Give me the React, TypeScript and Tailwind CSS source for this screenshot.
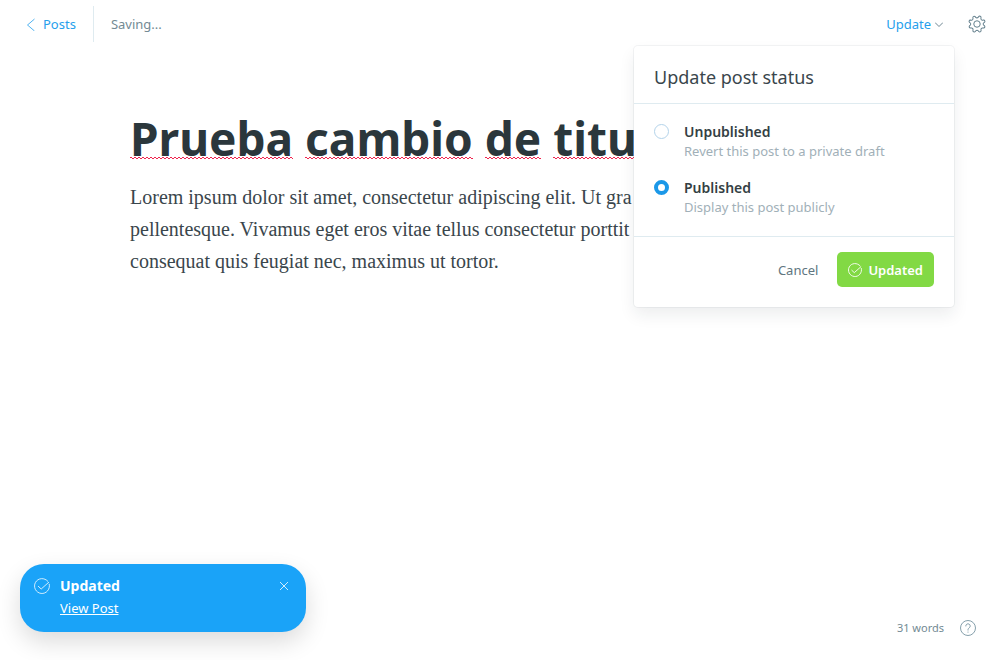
import { useState } from "react";

const titleWords = ["Prueba", "cambio", "de", "titu"];

const statuses = [
  { id: "draft", label: "Unpublished", hint: "Revert this post to a private draft" },
  { id: "published", label: "Published", hint: "Display this post publicly" },
];

function CheckCircle({ className }: { className: string }) {
  return (
    <svg viewBox="0 0 24 24" fill="none" stroke="currentColor" strokeLinecap="round" strokeLinejoin="round" className={className} aria-hidden="true">
      <path d="M22.9 9.3A11.2 11.2 0 1 1 20.6 4.8" />
      <path d="M6.5 12.5l4.3 4L22 6.5" />
    </svg>
  );
}

function Gear() {
  return (
    <svg viewBox="0 0 24 24" fill="none" stroke="currentColor" strokeWidth="1.3" strokeLinejoin="round" className="size-4.5" aria-hidden="true">
      <g transform="rotate(22.5 12 12)">
        <path d="M13.7 2.1a1.75 1.75 0 0 0-3.4 0l-.35 1.2a2 2 0 0 1-2.85 1.2L6 3.9A1.75 1.75 0 0 0 3.7 6.3l.6 1.1a2 2 0 0 1-1.1 2.8l-1.5.4a1.75 1.75 0 0 0 0 3.1l1.5.5a2 2 0 0 1 1.1 2.7l-.6 1.2A1.75 1.75 0 0 0 6 20.3l1.1-.6a2 2 0 0 1 2.85 1.2l.35 1.2a1.75 1.75 0 0 0 3.4 0l.35-1.2a2 2 0 0 1 2.85-1.2l1.1.6a1.75 1.75 0 0 0 2.4-2.3l-.7-1.2a2 2 0 0 1 1.2-2.7l1.4-.5a1.75 1.75 0 0 0 0-3.1l-1.4-.4a2 2 0 0 1-1.2-2.8l.7-1.1A1.75 1.75 0 0 0 18 3.9l-1.1.6a2 2 0 0 1-2.85-1.2z" />
      </g>
      <circle cx="12" cy="12" r="4.3" />
    </svg>
  );
}

function StatusMenu() {
  const [status, setStatus] = useState("published");
  return (
    <section
      aria-label="Update post status"
      className="absolute top-full right-0 z-10 w-80 rounded-[4px] bg-white shadow-[0_0_0_1px_rgba(99,114,130,0.08),0_8px_16px_rgba(27,39,51,0.08)]"
    >
      <h2 className="border-b border-[#dfebf0] px-5 pt-[17px] pb-3 text-lg leading-7 text-[#3a464c]">Update post status</h2>
      <fieldset className="flex flex-col gap-4.5 px-5 pt-4.5 pb-5">
        {statuses.map((item) => (
          <label key={item.id} className="flex items-start gap-[15px]">
            <input
              type="radio"
              name="status"
              checked={status === item.id}
              onChange={() => setStatus(item.id)}
              className="mt-0.5 size-[15px] shrink-0 appearance-none rounded-full border border-[#b3d3ea] bg-white checked:border-4 checked:border-[#1b98e8]"
            />
            <span className="flex flex-col">
              <span className="text-sm leading-5 font-semibold text-[#343f44]">{item.label}</span>
              <span className="text-[13px] leading-[18px] text-[#a1b0b8]">{item.hint}</span>
            </span>
          </label>
        ))}
      </fieldset>
      <footer className="flex items-center justify-end gap-[19px] border-t border-[#dfebf0] px-5 pt-[15px] pb-5">
        <button type="button" className="text-[13px] text-[#607680]">Cancel</button>
        <button type="button" className="flex h-[35px] items-center gap-1.5 rounded-[5px] bg-[#82d944] px-[11px] text-[13px] font-semibold text-white">
          <CheckCircle className="size-3.5 stroke-[1.5]" />
          Updated
        </button>
      </footer>
    </section>
  );
}

export default function App() {
  return (
    <div className="flex min-h-screen flex-col overflow-x-hidden bg-white font-['Noto_Sans',sans-serif] text-[13px] leading-5 text-[#738a94]">
      <header className="flex h-12 items-center justify-between pr-3.5 pl-6">
        <div className="flex items-center">
          <a href="#posts" className="flex h-9 items-center gap-1.5 border-r border-[#dfebf0] pr-[17px] text-[#26a0ec]">
            <svg viewBox="0 0 13 13" fill="none" stroke="currentColor" strokeWidth="0.8" className="size-[13px]" aria-hidden="true">
              <path d="M10.5 1L3.5 7l7 6" />
            </svg>
            Posts
          </a>
          <span className="pl-[17px]">Saving...</span>
        </div>
        <div className="flex items-center gap-3.5">
          <div className="relative flex h-11 items-center pr-[11px]">
            <button type="button" aria-expanded="true" className="flex items-center gap-1 text-[#26a0ec]">
              Update
              <svg viewBox="0 0 8 8" fill="none" stroke="#5f7986" strokeWidth="0.9" className="size-2" aria-hidden="true">
                <path d="M0 2.5l4 4 4-4" />
              </svg>
            </button>
            <StatusMenu />
          </div>
          <button type="button" aria-label="Settings" className="text-[#607d8a]">
            <Gear />
          </button>
        </div>
      </header>

      <main className="mx-auto w-full max-w-[740px] flex-1 pt-[60px]">
        <h1 className="text-[46px] leading-[60px] font-bold text-[#2b373c]">
          {titleWords.map((word, i) => (
            <span key={word}>
              {i > 0 && " "}
              <span className="bg-[linear-gradient(90deg,#f0244e_50%,transparent_50%),linear-gradient(90deg,#f0244e_50%,transparent_50%)] [background-position:0_calc(100%-11px),2px_calc(100%-10px)] [background-size:4px_1px] bg-repeat-x">
                {word}
              </span>
            </span>
          ))}
        </h1>
        <p className="mt-[13px] font-['Liberation_Serif',serif] text-xl leading-8 text-[#3a464c]">
          Lorem ipsum dolor sit amet, consectetur adipiscing elit. Ut gra
          <br />
          pellentesque. Vivamus eget eros vitae tellus consectetur porttit
          <br />
          consequat quis feugiat nec, maximus ut tortor.
        </p>
      </main>

      <footer className="flex items-end justify-between pt-6 pr-6 pb-[22px] pl-5">
        <aside
          role="status"
          className="mb-1.5 flex h-17 w-[286px] items-start gap-2.5 rounded-3xl bg-[#1aa3f8] pt-3 pr-4 pl-3.5 text-white shadow-[0_10px_24px_rgba(0,0,0,0.14)]"
        >
          <CheckCircle className="mt-0.5 size-4 stroke-[1.2]" />
          <div className="flex flex-1 flex-col gap-0.5">
            <strong className="text-sm leading-5 font-bold">Updated</strong>
            <a href="#view" className="self-start underline">View Post</a>
          </div>
          <button type="button" aria-label="Close notification" className="mt-1.5 mr-0.5">
            <svg viewBox="0 0 8 8" fill="none" stroke="currentColor" strokeWidth="0.8" className="size-2" aria-hidden="true">
              <path d="M0 0l8 8M8 0L0 8" />
            </svg>
          </button>
        </aside>
        <div className="flex items-center gap-4 text-[11px]">
          <span>31 words</span>
          <a href="#help" aria-label="Help" className="text-[#86a0ac]">
            <svg viewBox="0 0 16 16" fill="none" stroke="currentColor" strokeWidth="1" className="size-4" aria-hidden="true">
              <circle cx="8" cy="8" r="7.5" />
              <path d="M5.8 6.4V6a2.2 2.2 0 1 1 3.5 1.8C8.5 8.4 8 8.8 8 9.7v.8M8 11.6v1" />
            </svg>
          </a>
        </div>
      </footer>
    </div>
  );
}
